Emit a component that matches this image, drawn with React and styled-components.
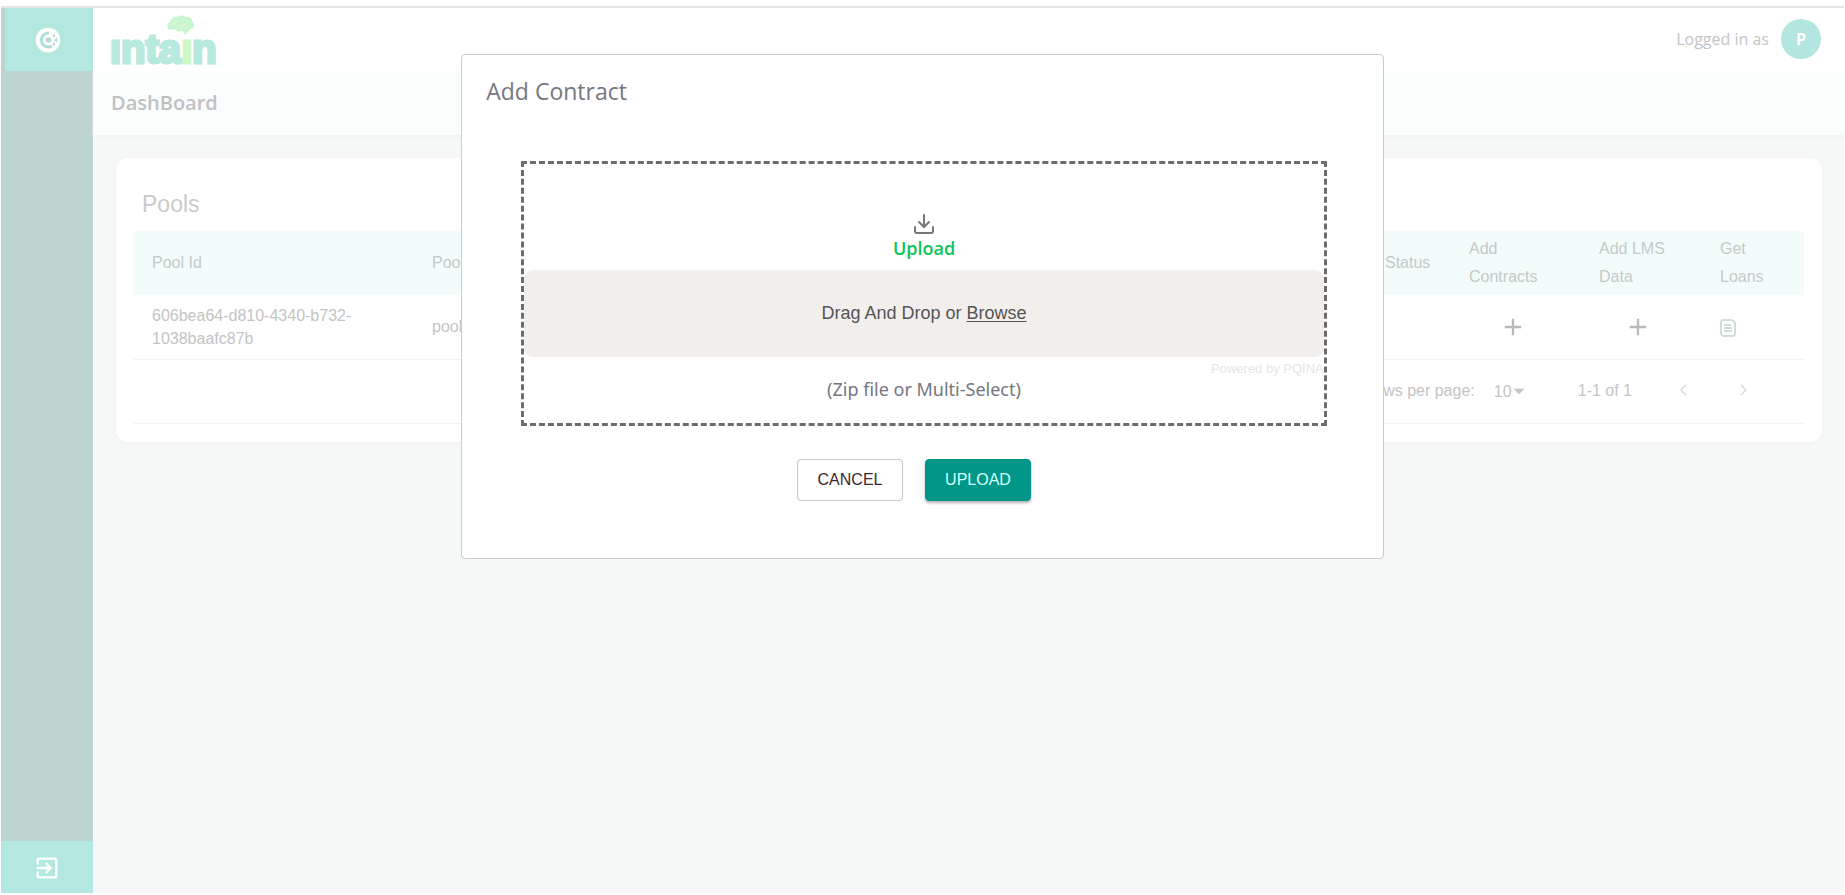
import React, {useState} from 'react';
import styled, {createGlobalStyle} from 'styled-components';
import {MdExitToApp, MdAdd, MdArrowDropDown} from 'react-icons/md';
import {FiDownload} from 'react-icons/fi';

const DashIcon = () => (
  <svg width="26" height="26" viewBox="0 0 26 26" fill="none" aria-hidden="true">
    <circle cx="13" cy="13" r="12.300" fill="#fff" />
    <path d="M14 6A7 7 0 1 0 17 19" stroke="#b5dcd7" strokeWidth="3" />
    <circle cx="13.500" cy="13" r="2.800" fill="#b5dcd7" />
    <path fill="#b5dcd7" d="M17 9L20 6.500V10.500ZM17 17L20 15.500V19.500ZM19 13L22.500 10.500V15.500Z" />
  </svg>
);

const Brain = () => (
  <BrainSvg width="29" height="21" viewBox="0 0 28 21" aria-hidden="true">
    <path fill="#c9f6cf" d="M1 12C0 9 2 7 4 7C4 3 8 1 11 2C13 0 17 0 19 2C23 1 26 4 26 7C29 10 27 14 23 14C23 17 19 18 18 20C17 18 18 16 15 16C12 17 9 16 8 14C4 16 1 14 1 12Z" />
    <path fill="none" stroke="#dffad8" strokeWidth="1" d="M5 10C8 7 10 9 12 6M13 12C15 9 18 11 20 8M8 5L11 7M16 4L18 6M18 14L22 11M9 13L12 11" />
  </BrainSvg>
);

const DocIcon = () => (
  <svg width="16" height="18" viewBox="0 0 16 18" fill="none" stroke="#c3d3cd" strokeWidth="1.500" aria-hidden="true">
    <path d="M2 1H12L15 4V15L14 17H3L1 15V2Z" />
    <path d="M4 6H11M4 9H12M4 12H12" />
  </svg>
);

const Chevron = ({d}) => (
  <svg width="8" height="12" viewBox="0 0 8 12" fill="none" stroke="#dcdcdc" strokeWidth="1.500" aria-hidden="true">
    <path d={d} />
  </svg>
);

const PoolsTable = () => {
  const [perPage, setPerPage] = useState('10');
  return(
      <Table>
        <colgroup>
          <Col $w={280} />
          <Col />
          <Col $w={84} />
          <Col $w={130} />
          <Col $w={121} />
          <Col $w={103} />
        </colgroup>
        <thead>
          <tr>
            <Th>Pool Id</Th>
            <Th>Pool Name</Th>
            <Th>Status</Th>
            <Th>Add Contracts</Th>
            <Th>Add LMS Data</Th>
            <Th>Get Loans</Th>
          </tr>
        </thead>
        <tbody>
          <tr>
            <Td>606bea64-d810-4340-b732-1038baafc87b</Td>
            <Td>pool1</Td>
            <Td></Td>
            <Td $center><IconButton aria-label="Add contracts"><MdAdd size={28} /></IconButton></Td>
            <Td $center><IconButton aria-label="Add LMS data"><MdAdd size={28} /></IconButton></Td>
            <Td><IconButton aria-label="Get loans"><DocIcon /></IconButton></Td>
          </tr>
        </tbody>
        <tfoot>
          <tr>
            <FootCell colSpan={6}>
              <Pagination>
                <label htmlFor="perPage">Rows per page:</label>
                <SelectWrap>
                  <Select id="perPage" value={perPage} onChange={(e) => setPerPage(e.target.value)}>
                    <option>10</option>
                    <option>25</option>
                    <option>50</option>
                  </Select>
                  <MdArrowDropDown size={26} />
                </SelectWrap>
                <span>1-1 of 1</span>
                <Pager>
                  <PageButton aria-label="Previous page"><Chevron d="M7 1L2 6L7 11" /></PageButton>
                  <PageButton aria-label="Next page"><Chevron d="M1 1L6 6L1 11" /></PageButton>
                </Pager>
              </Pagination>
            </FootCell>
          </tr>
        </tfoot>
      </Table>
  );
}

const AddContract = () => (
  <Overlay>
    <Modal role="dialog" aria-labelledby="modalTitle">
      <ModalTitle id="modalTitle">Add Contract</ModalTitle>
      <DropZone>
        <FiDownload size={24} />
        <UploadLabel>Upload</UploadLabel>
        <DropPanel>
          <span>Drag And Drop or <Browse href="#browse">Browse</Browse></span>
        </DropPanel>
        <Credits href="#pqina">Powered by PQINA</Credits>
        <Hint>(Zip file or Multi-Select)</Hint>
      </DropZone>
      <Actions>
        <Button>CANCEL</Button>
        <Button $primary>UPLOAD</Button>
      </Actions>
    </Modal>
  </Overlay>
);

const App = () => {
  return(
    <>
      <GlobalStyle />
      <Page>
        <Sidebar>
          <SideButton $tall aria-label="Dashboard"><DashIcon /></SideButton>
          <SideButton aria-label="Log out"><MdExitToApp size={28} /></SideButton>
        </Sidebar>
        <Content>
          <Header>
            <Logo href="#home">
              <Brain />
              <span>ınta<b>ı</b>n</span>
            </Logo>
            <User>
              <span>Logged in as</span>
              <Avatar>P</Avatar>
            </User>
          </Header>
          <SubHeader>DashBoard</SubHeader>
          <Card>
            <CardTitle>Pools</CardTitle>
            <PoolsTable />
          </Card>
        </Content>
      </Page>
      <AddContract />
    </>
  );
}

export default App;

const GlobalStyle = createGlobalStyle`
    * {
        box-sizing: border-box;
    }
    body {
        margin: 0;
        background: #ffffff;
        font-family: 'Liberation Sans', Arial, sans-serif;
        font-size: 16px;
        color: #c4c4c4;
    }
    button, select {
        font-family: inherit;
        color: inherit;
    }
    `;

const Page = styled.div`
    display: flex;
    min-height: calc(100vh - 8px);
    margin: 6px 1px 2px;
    border-top: 2px solid #e4e6e6;
    background: #f6f8f8;
    `;

const Sidebar = styled.nav`
    width: 92px;
    flex-shrink: 0;
    display: flex;
    flex-direction: column;
    justify-content: space-between;
    background: #bdd3d0;
    `;

const SideButton = styled.button`
    height: ${props => props.$tall ? '63px' : '52px'};
    margin-left: ${props => props.$tall ? '4px' : '0'};
    padding: ${props => props.$tall ? '0 2px 0 0' : '2px 0 0'};
    border: none;
    background: #b3e8e0;
    color: white;
    cursor: pointer;
    display: flex;
    align-items: center;
    justify-content: center;
    `;

const Content = styled.div`
    flex: 1;
    min-width: 0;
    `;

const Header = styled.header`
    height: 64px;
    padding: 0 23px 0 17px;
    background: #ffffff;
    display: flex;
    justify-content: space-between;
    align-items: center;
    `;

const Logo = styled.a`
    position: relative;
    align-self: flex-end;
    padding-bottom: 8px;
    text-decoration: none;
    font-family: 'Liberation Sans', Arial, sans-serif;
    font-size: 40px;
    font-weight: bold;
    line-height: 30px;
    color: #b8e9dd;
    span {
        display: block;
        -webkit-text-stroke: 3px #b8e9dd;
    }
    b {
        color: #cff8c8;
        -webkit-text-stroke: 3px #cff8c8;
    }
    `;

const BrainSvg = styled.svg`
    position: absolute;
    left: 56px;
    bottom: 36px;
    `;

const User = styled.div`
    display: flex;
    align-items: center;
    gap: 12px;
    font-family: 'Open Sans', sans-serif;
    font-size: 16px;
    padding-bottom: 2px;
    `;

const Avatar = styled.div`
    width: 40px;
    height: 40px;
    border-radius: 50%;
    background: #b3e6e0;
    color: white;
    font-weight: bold;
    display: flex;
    align-items: center;
    justify-content: center;
    `;

const SubHeader = styled.h1`
    height: 64px;
    margin: 0;
    padding: 0 18px;
    background: #f9fdfc;
    border-bottom: 1px solid #f0f4f3;
    box-shadow: 0 1px 2px #eef2f1;
    font-family: 'Open Sans', sans-serif;
    font-size: 20px;
    font-weight: 600;
    line-height: 62px;
    color: #c0c0c3;
    `;

const Card = styled.section`
    margin: 22px 22px 22px 23px;
    padding: 0 18px 18px 17px;
    border-radius: 12px;
    background: #ffffff;
    box-shadow: 0 1px 4px #eef1f0;
    `;

const CardTitle = styled.h2`
    margin: 0;
    padding: 32px 9px 13px;
    font-size: 23px;
    font-weight: normal;
    line-height: 28px;
    color: #cacaca;
    `;

const Table = styled.table`
    width: 100%;
    table-layout: fixed;
    border-collapse: collapse;
    `;

const Col = styled.col`
    width: ${props => props.$w ? props.$w + 'px' : 'auto'};
    `;

const Th = styled.th`
    height: 64px;
    padding: 0 24px 0 19px;
    background: #f2fdfb;
    text-align: left;
    font-weight: normal;
    line-height: 28px;
    color: #c3cac8;
    &:nth-child(3) {
        padding-right: 0;
    }
    `;

const Td = styled.td`
    height: 64px;
    padding: 0 24px 0 19px;
    border-bottom: 1px solid #f3f3f3;
    text-align: ${props => props.$center ? 'center' : 'left'};
    line-height: 23px;
    `;

const IconButton = styled.button`
    padding: 0;
    border: none;
    background: none;
    color: #b9b9b9;
    cursor: pointer;
    vertical-align: middle;
    svg {
        display: block;
    }
    `;

const FootCell = styled.td`
    height: 64px;
    padding: 0;
    border-bottom: 1px solid #f3f3f3;
    `;

const Pagination = styled.div`
    display: flex;
    align-items: center;
    justify-content: flex-end;
    padding-right: 30px;
    `;

const SelectWrap = styled.div`
    display: flex;
    align-items: center;
    margin: 0 46px 0 19px;
    svg {
        margin-left: -34px;
        pointer-events: none;
    }
    `;

const Select = styled.select`
    width: 46px;
    padding: 0;
    border: none;
    background: none;
    appearance: none;
    font-size: 16px;
    `;

const Pager = styled.div`
    display: flex;
    margin-left: 20px;
    `;

const PageButton = styled.button`
    width: 61px;
    height: 48px;
    padding: 0;
    border: none;
    background: none;
    cursor: pointer;
    `;

const Overlay = styled.div`
    position: fixed;
    inset: 0;
    display: flex;
    justify-content: center;
    align-items: flex-start;
    padding-top: 54px;
    `;

const Modal = styled.div`
    width: 50%;
    padding: 18px 56px 57px 59px;
    border: 1px solid #c8cccc;
    border-radius: 4px;
    background: #ffffff;
    `;

const ModalTitle = styled.h2`
    margin: 0 0 52px -35px;
    font-family: 'Open Sans', sans-serif;
    font-size: 23px;
    font-weight: normal;
    line-height: 36px;
    color: #77777f;
    `;

const DropZone = styled.div`
    display: flex;
    flex-direction: column;
    align-items: center;
    padding-top: 48px;
    border: 3px dashed #6c6c6c;
    color: #777777;
    `;

const UploadLabel = styled.div`
    padding-bottom: 10px;
    font-family: 'Open Sans', sans-serif;
    font-size: 18px;
    font-weight: 600;
    line-height: 24px;
    color: #0ac653;
    `;

const DropPanel = styled.div`
    align-self: stretch;
    height: 87px;
    border-radius: 9px;
    background: #f1eeec;
    display: flex;
    align-items: center;
    justify-content: center;
    font-size: 18px;
    color: #555555;
    `;

const Browse = styled.a`
    color: inherit;
    text-underline-offset: 2px;
    `;

const Credits = styled.a`
    align-self: flex-end;
    font-size: 13px;
    line-height: 24px;
    text-decoration: none;
    color: #e6e6e6;
    `;

const Hint = styled.p`
    margin: 0;
    padding-bottom: 26px;
    font-family: 'Noto Sans', sans-serif;
    font-size: 18px;
    line-height: 16px;
    color: #75757f;
    `;

const Actions = styled.div`
    display: flex;
    justify-content: center;
    gap: 22px;
    margin-top: 33px;
    padding-right: 20px;
    `;

const Button = styled.button`
    width: 106px;
    height: 42px;
    padding: 0;
    border: 1px solid ${props => props.$primary ? '#009688' : '#c6c6c6'};
    border-radius: 4px;
    background: ${props => props.$primary ? '#009688' : '#ffffff'};
    color: ${props => props.$primary ? '#d5fffa' : '#3d2730'};
    box-shadow: ${props => props.$primary ? '0 2px 3px #b5b5b5' : 'none'};
    font-size: 16px;
    cursor: pointer;
    `;
